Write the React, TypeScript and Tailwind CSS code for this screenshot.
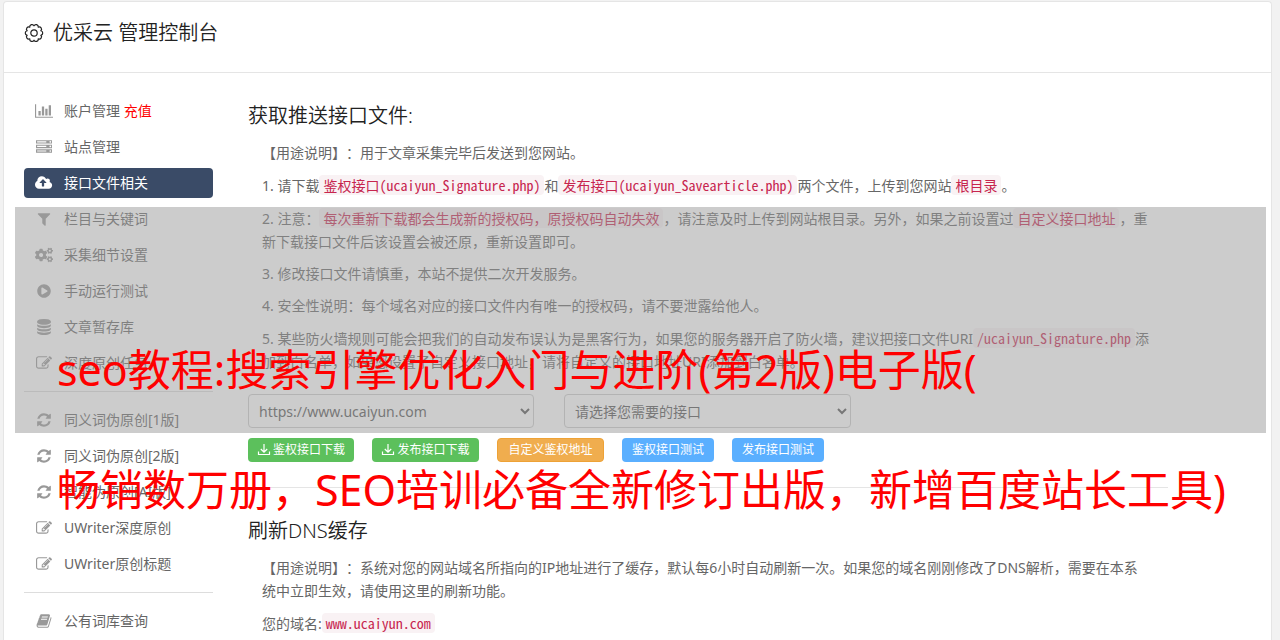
import type { ReactNode } from 'react';
import { FaCogs, FaPlayCircle } from 'react-icons/fa';

const ICONS = {
  chart: { w: 2048, d: 'M640 896v512H384V896h256zm384-512v1024H768V384h256zm1024 1152v128H0V128h128v1408h1920zm-640-896v768h-256V640h256zm384-384v1152h-256V256h256z' },
  server: { w: 1792, d: 'M128 1408h1024v-128H128v128zm0-512h1024V768H128v128zm1568 448q0-40-28-68t-68-28-68 28-28 68 28 68 68 28 68-28 28-68zM128 384h1024V256H128v128zm1568 448q0-40-28-68t-68-28-68 28-28 68 28 68 68 28 68-28 28-68zm0-512q0-40-28-68t-68-28-68 28-28 68 28 68 68 28 68-28 28-68zm96 832v384H0v-384h1792zm0-512v384H0V640h1792zm0-512v384H0V128h1792z' },
  upload: { w: 1920, d: 'M1280 864q0-14-9-23l-352-352q-9-9-23-9t-23 9l-351 351q-10 12-10 24 0 14 9 23t23 9h224v352q0 13 9.5 22.5t22.5 9.5h192q13 0 22.5-9.5t9.5-22.5v-352h224q13 0 22.5-9.5t9.5-22.5zm640 288q0 159-112.5 271.5t-271.5 112.5h-1088q-185 0-316.5-131.5t-131.5-316.5q0-130 70-240t188-165q-2-30-2-43 0-212 150-362t362-150q156 0 285.5 87t188.5 231q71-62 166-62 106 0 181 75t75 181q0 76-41 138 130 31 213.5 135.5t83.5 238.5z' },
  filter: { w: 1792, d: 'M1595 295q17 41-14 70l-493 493v742q0 42-39 59-13 5-25 5-27 0-45-19l-256-256q-19-19-19-45V858L211 365q-31-29-14-70 17-39 59-39h1280q42 0 59 39z' },
  database: { w: 1792, d: 'M896 768q237 0 443-43t325-127v170q0 69-103 128t-280 93.5-385 34.5-385-34.5T231 896 128 768V598q119 84 325 127t443 43zm0 768q237 0 443-43t325-127v170q0 69-103 128t-280 93.5-385 34.5-385-34.5-280-93.5-103-128v-170q119 84 325 127t443 43zm0-384q237 0 443-43t325-127v170q0 69-103 128t-280 93.5-385 34.5-385-34.5-280-93.5-103-128V982q119 84 325 127t443 43zM896 0q208 0 385 34.5t280 93.5 103 128v128q0 69-103 128t-280 93.5T896 640t-385-34.5T231 512 128 384V256q0-69 103-128t280-93.5T896 0z' },
  edit: { w: 1792, d: 'M888 1184l116-116-152-152-116 116v56h96v96h56zm440-720q-16-16-33 1L945 815q-17 17-1 33t33-1l350-350q17-17 1-33zm80 594v190q0 119-84.5 203.5T1120 1536H288q-119 0-203.5-84.5T0 1248V416q0-119 84.5-203.5T288 128h832q63 0 117 25 15 7 18 23 3 17-9 29l-49 49q-14 14-32 8-23-6-45-6H288q-66 0-113 47t-47 113v832q0 66 47 113t113 47h832q66 0 113-47t47-113v-126q0-13 9-22l64-64q15-15 35-7t20 29zm-96-738l288 288-672 672H640V992zm444 132l-92 92-288-288 92-92q28-28 68-28t68 28l152 152q28 28 28 68t-28 68z' },
  refresh: { w: 1792, d: 'M1639 1056q0 5-1 7-64 268-268 434.5T892 1664q-146 0-282.5-55T366 1452l-129 129q-19 19-45 19t-45-19-19-45v-448q0-26 19-45t45-19h448q26 0 45 19t19 45-19 45l-137 137q71 66 161 102t187 36q134 0 250-65t186-179q11-17 53-117 8-23 30-23h192q13 0 22.5 9.5t9.5 22.5zm25-800v448q0 26-19 45t-45 19h-448q-26 0-45-19t-19-45 19-45l138-138Q1097 384 896 384q-134 0-250 65T460 628q-11 17-53 117-8 23-30 23H178q-13 0-22.5-9.5T146 736v-7q65-268 270-434.5T896 128q146 0 284 55.5T1425 340l130-129q19-19 45-19t45 19 19 45z' },
  book: { w: 1792, d: 'M1703 478q40 57 18 129l-275 906q-19 64-76.5 107.5T1247 1664H324q-77 0-148.5-53.5T76 1479q-24-67-2-127 0-4 3-27t4-37q1-8-3-21.5t-3-19.5q2-11 8-21t16.5-23.5T116 1179q23-38 45-91.5t30-91.5q3-10 .5-30t-.5-28q3-11 17-28t17-23q21-36 42-92t25-90q1-9-2.5-32t.5-28q4-13 22-30.5t22-22.5q19-26 42.5-84.5T404 411q1-8-3-25.5t-2-26.5q2-8 9-18t18-23 17-21q8-12 16.5-30.5t15-35 16-36 19.5-32 26.5-23.5 36-11.5T620 134l-1 3q38-9 51-9h761q74 0 114 56t18 130l-274 906q-36 119-71.5 153.5T1089 1408H220q-27 0-38 15-11 16-1 43 24 70 144 70h923q29 0 56-15.5t35-41.5l300-987q7-22 5-57 38 15 59 43zm-1064 2q-4 13 2 22.5t20 9.5h608q13 0 25.5-9.5T1311 480l21-64q4-13-2-22.5t-20-9.5H702q-13 0-25.5 9.5T660 416zm-83 256q-4 13 2 22.5t20 9.5h608q13 0 25.5-9.5T1228 736l21-64q4-13-2-22.5t-20-9.5H619q-13 0-25.5 9.5T577 672z' },
};

function Icon({ name }: { name: keyof typeof ICONS }) {
  const { w, d } = ICONS[name];
  return (
    <svg viewBox={`0 0 ${w} 1792`} className="h-4 w-auto" fill="currentColor" aria-hidden="true">
      <path d={d} />
    </svg>
  );
}

function GearIcon() {
  return (
    <svg viewBox="0 0 20 20" className="w-5 h-5" fill="none" stroke="currentColor" strokeWidth="1.2" strokeLinejoin="round" aria-hidden="true">
      <path d="M16.85 12.22A2.25 2.25 0 0 1 14.23 15.82 2.25 2.25 0 0 1 10 17.2 2.25 2.25 0 0 1 5.77 15.82 2.25 2.25 0 0 1 3.15 12.22 2.25 2.25 0 0 1 3.15 7.78 2.25 2.25 0 0 1 5.77 4.18 2.25 2.25 0 0 1 10 2.8 2.25 2.25 0 0 1 14.23 4.18 2.25 2.25 0 0 1 16.85 7.78 2.25 2.25 0 0 1 16.85 12.22z" />
      <circle cx="10" cy="10" r="3.2" />
    </svg>
  );
}

function DownloadIcon() {
  return (
    <svg viewBox="0 0 14 14" className="w-3.5 h-3.5" fill="none" stroke="currentColor" strokeWidth="1.2" aria-hidden="true">
      <path d="M7 1v8M3.8 6 7 9.2 10.2 6M1.5 8.5v3h11v-3" />
    </svg>
  );
}

interface NavItem {
  label: string;
  icon: ReactNode;
  extra?: string;
  active?: boolean;
}

const NAV_GROUPS: NavItem[][] = [
  [
    { label: '账户管理', icon: <Icon name="chart" />, extra: '充值' },
    { label: '站点管理', icon: <Icon name="server" /> },
    { label: '接口文件相关', icon: <Icon name="upload" />, active: true },
    { label: '栏目与关键词', icon: <Icon name="filter" /> },
    { label: '采集细节设置', icon: <FaCogs className="w-[18px] h-4" /> },
    { label: '手动运行测试', icon: <FaPlayCircle className="w-3.5 h-3.5" /> },
    { label: '文章暂存库', icon: <Icon name="database" /> },
    { label: '深度原创任务', icon: <Icon name="edit" /> },
  ],
  [
    { label: '同义词伪原创[1版]', icon: <Icon name="refresh" /> },
    { label: '同义词伪原创[2版]', icon: <Icon name="refresh" /> },
    { label: '智能伪原创[AI版]', icon: <Icon name="refresh" /> },
    { label: 'UWriter深度原创', icon: <Icon name="edit" /> },
    { label: 'UWriter原创标题', icon: <Icon name="edit" /> },
  ],
  [{ label: '公有词库查询', icon: <Icon name="book" /> }],
];

function Sidebar() {
  return (
    <nav className="w-[189px] flex-shrink-0 text-sm">
      {NAV_GROUPS.map((group, i) => (
        <ul key={i} className={`flex flex-col gap-1.5 ${i > 0 ? 'mt-[13px] pt-[13px] border-t border-[#ddd]' : ''}`}>
          {group.map((item) => (
            <li key={item.label}>
              <a
                href="#"
                className={`flex items-center h-[30px] pl-2.5 gap-2.5 rounded ${
                  item.active ? 'bg-[#3a4b67] text-white' : 'text-[#666]'
                }`}
              >
                <span className={`w-5 flex justify-center ${item.active ? 'text-white' : 'text-[#999]'}`}>{item.icon}</span>
                <span>
                  {item.label}
                  {item.extra && <span className="text-[#f00]"> {item.extra}</span>}
                </span>
              </a>
            </li>
          ))}
        </ul>
      ))}
    </nav>
  );
}

function Code({ children }: { children: ReactNode }) {
  return (
    <code className="px-1 rounded bg-[#f9f2f4] text-[#c7254e] leading-6 font-['Noto_Sans_Mono_CJK_SC','Liberation_Mono',monospace]">
      {children}
    </code>
  );
}

const BUTTON = 'h-6 rounded flex items-center justify-center gap-0.5 text-xs text-white';

export default function App() {
  return (
    <div
      lang="zh-CN"
      className="relative min-h-screen overflow-hidden flex flex-col bg-[#f2f2f2] pl-[3px] pr-2 pt-px font-['Noto_Sans','Noto_Sans_CJK_SC',sans-serif] text-[#666] [text-spacing-trim:space-all]"
    >
      <main className="flex-1 bg-white border border-b-0 border-[#e5e5e5] rounded-t">
        <header className="h-[71px] pl-5 pb-2 flex items-center gap-[9px] border-b border-[#e5e5e5] text-[#222]">
          <GearIcon />
          <h1 className="text-xl font-[350]">优采云 管理控制台</h1>
        </header>

        <div className="flex gap-[35px] pl-5 pr-[103px] pt-[23px]">
          <Sidebar />

          <div className="flex-1 min-w-0 text-sm">
            <section>
              <h2 className="text-xl font-[350] leading-[30px] pt-[5px] text-[#222]">获取推送接口文件:</h2>
              <div className="pl-3.5 pr-4 pt-2.5 flex flex-col gap-[9px] leading-[23px]">
                <p>【用途说明】：用于文章采集完毕后发送到您网站。</p>
                <p>
                  1. 请下载<Code>鉴权接口(ucaiyun_Signature.php)</Code>和<Code>发布接口(ucaiyun_Savearticle.php)</Code>
                  两个文件，上传到您网站<Code>根目录</Code>。
                </p>
                <p>
                  2. 注意：<Code>每次重新下载都会生成新的授权码，原授权码自动失效</Code>
                  ，请注意及时上传到网站根目录。另外，如果之前设置过<Code>自定义接口地址</Code>，重新下载接口文件后该设置会被还原，重新设置即可。
                </p>
                <p>3. 修改接口文件请慎重，本站不提供二次开发服务。</p>
                <p>4. 安全性说明：每个域名对应的接口文件内有唯一的授权码，请不要泄露给他人。</p>
                <p>
                  5. 某些防火墙规则可能会把我们的自动发布误认为是黑客行为，如果您的服务器开启了防火墙，建议把接口文件URI
                  <Code>/ucaiyun_Signature.php</Code>添加到白名单，如果您设置了自定义接口地址，请将自定义的接口地址URI添加到白名单。
                </p>
              </div>

              <div className="flex gap-[30px] mt-[21px]">
                <select aria-label="站点" className="w-[286px] h-[34px] px-1.5 border border-[#ccc] rounded bg-white text-[#555]">
                  <option>https://www.ucaiyun.com</option>
                </select>
                <select aria-label="接口" className="w-[287px] h-[34px] px-1.5 border border-[#ccc] rounded bg-white text-[#555]">
                  <option>请选择您需要的接口</option>
                </select>
              </div>

              <div className="flex gap-[18px] mt-2.5">
                <button className={`${BUTTON} w-[106px] bg-[#5cc05c]`}>
                  <DownloadIcon />
                  鉴权接口下载
                </button>
                <button className={`${BUTTON} w-[107px] bg-[#5cc05c]`}>
                  <DownloadIcon />
                  发布接口下载
                </button>
                <button className={`${BUTTON} w-[107px] bg-[#f0ad4e] border border-[#eea236]`}>自定义鉴权地址</button>
                <button className={`${BUTTON} w-[92px] bg-[#5aafff]`}>鉴权接口测试</button>
                <button className={`${BUTTON} w-[92px] bg-[#5aafff]`}>发布接口测试</button>
              </div>
            </section>

            <section className="mt-[25px] pt-7 border-t border-[#e5e5e5]">
              <h2 className="text-xl font-[350] leading-[30px] text-[#222]">刷新DNS缓存</h2>
              <div className="pl-3.5 pr-5 pt-2.5 flex flex-col gap-[9px] leading-[23px]">
                <p>
                  【用途说明】：系统对您的网站域名所指向的IP地址进行了缓存，默认每6小时自动刷新一次。如果您的域名刚刚修改了DNS解析，需要在本系统中立即生效，请使用这里的刷新功能。
                </p>
                <p>
                  您的域名:<Code>www.ucaiyun.com</Code>
                </p>
              </div>
            </section>
          </div>
        </div>
      </main>

      {/* caption band over the page */}
      <div className="absolute top-[207px] left-[15px] right-3.5 h-[226px] bg-[#999]/50 pointer-events-none" />
      <p className="absolute top-[310px] left-[57px] right-0 text-[43px] leading-[120px] text-[#f00] whitespace-nowrap pointer-events-none">
        seo教程:搜索引擎优化入门与进阶(第2版)电子版(
        <br />
        畅销数万册，SEO培训必备全新修订出版，新增百度站长工具)
      </p>
    </div>
  );
}
